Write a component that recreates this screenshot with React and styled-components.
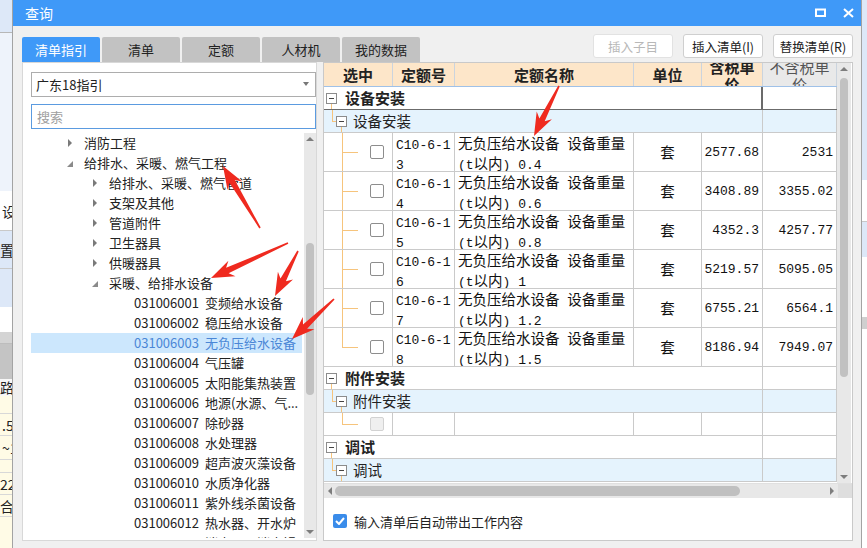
import React from "react";
import styled, { createGlobalStyle } from "styled-components";

const GlobalStyle = createGlobalStyle`
  html, body {
    margin: 0;
    padding: 0;
  }
  body {
    width: 867px;
    height: 548px;
    overflow: hidden;
    font-family: "Noto Sans CJK SC", "Noto Sans", sans-serif;
  }
  * {
    box-sizing: border-box;
  }
`;

const CJK = `"Noto Sans CJK SC", "Noto Sans", sans-serif`;
const MONO = `"Liberation Mono", "DejaVu Sans Mono", "Noto Sans CJK SC", monospace`;
const COLS = "69px 62px 179px 68px 61px 74px";
const GRID_LINE = "#cacaca";
const ORANGE = "#f6c47c";

const Page = styled.div`
  position: relative;
  display: flex;
  width: 867px;
  height: 548px;
  overflow: hidden;
  background: #fff;
`;

/* background application peeking out on both sides */
const Strip = styled.div`
  display: flex;
  flex-direction: column;
  width: ${({ w }) => w}px;
  flex-shrink: 0;
  overflow: hidden;
`;

const StripBlock = styled.div`
  height: ${({ h }) => h}px;
  flex-shrink: 0;
  background: ${({ bg }) => bg};
  border-bottom: 1px solid ${({ line }) => line || "transparent"};
  font-family: ${CJK};
  font-size: 14px;
  line-height: ${({ h }) => h}px;
  color: #222;
  white-space: nowrap;
  padding-left: ${({ shift }) => shift || 0}px;
`;

const Dialog = styled.div`
  display: flex;
  flex-direction: column;
  width: 850px;
  height: 548px;
  flex-shrink: 0;
  overflow: hidden;
  border-left: 1px solid #a3a3a3;
  border-right: 1px solid #a3a3a3;
  background: #f0f0f0;
`;

const TitleBar = styled.div`
  display: flex;
  align-items: center;
  height: 26px;
  flex-shrink: 0;
  padding: 0 7px 1px 12px;
  background: #3f99f8;
  color: #fff;
  font-family: ${CJK};
  font-size: 14px;
`;

const Title = styled.span`
  flex: 1;
`;

const TitleIcons = styled.div`
  display: flex;
  align-items: center;
  gap: 17px;
`;

const Body = styled.div`
  display: flex;
  flex-direction: column;
  flex: 1;
  min-height: 0;
  padding: 0 8px 7px 9px;
`;

const Toolbar = styled.div`
  display: flex;
  height: 36px;
  flex-shrink: 0;
`;

const Tabs = styled.div`
  display: flex;
  align-items: flex-end;
  gap: 2px;
`;

const Tab = styled.div`
  width: 78px;
  height: 25px;
  display: flex;
  align-items: center;
  justify-content: center;
  border-radius: 2px 2px 0 0;
  font-family: ${CJK};
  font-size: 13px;
  background: ${({ active }) => (active ? "#3f99f8" : "#c2c2c2")};
  color: ${({ active }) => (active ? "#fff" : "#222")};
`;

const Buttons = styled.div`
  display: flex;
  gap: 10px;
  margin-left: auto;
  padding-top: 8px;
`;

const Button = styled.div`
  width: 80px;
  height: 24px;
  display: flex;
  align-items: center;
  justify-content: center;
  background: #fff;
  border: 1px solid ${({ disabled }) => (disabled ? "#e2e2e2" : "#cfcfcf")};
  border-radius: 3px;
  font-family: ${CJK};
  font-size: 12.5px;
  color: ${({ disabled }) => (disabled ? "#b8b8b8" : "#222")};
`;

const Content = styled.div`
  display: flex;
  gap: 6px;
  flex: 1;
  min-height: 0;
`;

/* ---------- left: guide tree ---------- */

const LeftPanel = styled.div`
  width: 295px;
  display: flex;
  flex-direction: column;
  overflow: hidden;
  background: #fff;
  border: 1px solid #d8d8d8;
  padding: 9px 0 2px 8px;
`;

const Select = styled.div`
  height: 25px;
  flex-shrink: 0;
  display: flex;
  align-items: center;
  padding: 0 6px 1px 4px;
  border: 1px solid #adadad;
  font-family: ${CJK};
  font-size: 13px;
  color: #222;
`;

const SelectText = styled.span`
  flex: 1;
`;

const Caret = styled.span`
  width: 0;
  height: 0;
  border-left: 3px solid transparent;
  border-right: 3px solid transparent;
  border-top: 4px solid #777;
`;

const Search = styled.div`
  height: 25px;
  flex-shrink: 0;
  margin-top: 7px;
  display: flex;
  align-items: center;
  padding: 0 5px 1px;
  border: 1px solid #5b9be0;
  font-family: ${CJK};
  font-size: 13px;
  color: #a0a0a0;
`;

const TreeWrap = styled.div`
  flex: 1;
  display: flex;
  gap: 2px;
  margin-top: 4px;
  min-height: 0;
`;

const TreeList = styled.div`
  flex: 1;
  overflow: hidden;
`;

const TreeRow = styled.div`
  display: flex;
  align-items: center;
  height: 20px;
  padding-left: ${({ indent }) => indent}px;
  padding-bottom: 1px;
  background: ${({ selected }) => (selected ? "#cce7fd" : "transparent")};
  color: ${({ selected }) => (selected ? "#4a86d6" : "#222")};
  font-family: ${CJK};
  font-size: 13px;
  white-space: nowrap;
`;

const Toggle = styled.span`
  width: 17px;
  display: flex;
  align-items: center;
`;

const ClosedArrow = styled.span`
  width: 0;
  height: 0;
  border-top: 4px solid transparent;
  border-bottom: 4px solid transparent;
  border-left: 4px solid #7a7a7a;
  margin-left: 1px;
`;

const OpenArrow = styled.span`
  width: 0;
  height: 0;
  border-left: 6px solid transparent;
  border-bottom: 6px solid #8a8a8a;
  margin-top: 3px;
`;

const Code = styled.span`
  width: 71px;
`;

const VScroll = styled.div`
  width: ${({ w }) => w}px;
  flex-shrink: 0;
  display: flex;
  flex-direction: column;
  align-items: center;
  background: #e8e8e8;
  padding: 4px 0;
`;

const ScrollSpace = styled.div`
  height: ${({ h }) => h}px;
  flex-shrink: 0;
`;

const Thumb = styled.div`
  width: 8px;
  height: ${({ h }) => h}px;
  border-radius: 4px;
  background: #c1c1c1;
  flex-shrink: 0;
`;

const UpArrow = styled.span`
  width: 0;
  height: 0;
  border-left: 4px solid transparent;
  border-right: 4px solid transparent;
  border-bottom: 4px solid #7d7d7d;
`;

const DownArrow = styled(UpArrow)`
  border-bottom: none;
  border-top: 4px solid #7d7d7d;
  margin-top: auto;
`;

/* ---------- right: quota table ---------- */

const RightPanel = styled.div`
  flex: 1;
  display: flex;
  flex-direction: column;
  min-height: 0;
  overflow: hidden;
  background: #fff;
  border: 1px solid #c9c9c9;
`;

const GridArea = styled.div`
  display: flex;
  height: 420px;
  flex-shrink: 0;
`;

const Table = styled.div`
  width: 513px;
  overflow: hidden;
`;

const Row = styled.div`
  display: grid;
  grid-template-columns: ${COLS};
  height: ${({ h }) => h}px;
  border-bottom: 1px solid ${({ line }) => line || GRID_LINE};
  background: ${({ bg }) => bg || "#fff"};
`;

const HeadCell = styled.div`
  display: flex;
  align-items: center;
  justify-content: center;
  overflow: hidden;
  text-align: center;
  background: ${({ plain }) => (plain ? "#e9e9e9" : "#fde6c9")};
  border-right: 1px solid #cbd4de;
  font-family: ${CJK};
  font-size: 15px;
  line-height: 17px;
  font-weight: ${({ plain }) => (plain ? 400 : 700)};
  color: ${({ plain }) => (plain ? "#555" : "#222")};
`;

const Cell = styled.div`
  display: flex;
  align-items: ${({ top }) => (top ? "flex-start" : "center")};
  justify-content: ${({ align }) =>
    align === "right" ? "flex-end" : align === "center" ? "center" : "flex-start"};
  padding: ${({ top }) => (top ? "0 3px" : "0 3px")};
  border-right: 1px solid ${GRID_LINE};
  overflow: hidden;
  font-family: ${CJK};
  font-size: 14.5px;
  line-height: 20px;
  color: #111;
`;

const TreeCell = styled.div`
  display: flex;
  align-items: center;
  align-self: stretch;
  padding-left: ${({ pad }) => pad}px;
  border-right: 1px solid ${GRID_LINE};
`;

const GroupCell = styled.div`
  grid-column: span 5;
  display: flex;
  align-items: stretch;
  padding-left: ${({ pad }) => pad}px;
  border-right: ${({ focused }) => (focused ? "2px solid #6b6b6b" : `1px solid ${GRID_LINE}`)};
  border-bottom: ${({ focused }) => (focused ? "1px solid #6b6b6b" : "none")};
  margin-bottom: ${({ focused }) => (focused ? "-1px" : "0")};
`;

const GroupLabel = styled.span`
  display: flex;
  align-items: center;
  margin-left: ${({ gap }) => gap}px;
  padding-bottom: 1px;
  font-family: ${CJK};
  font-size: ${({ bold }) => (bold ? "15px" : "14.5px")};
  font-weight: ${({ bold }) => (bold ? 700 : 400)};
  color: #222;
`;

const BoxColumn = styled.div`
  display: flex;
  flex-direction: column;
  align-items: center;
  width: 11px;
`;

const Stem = styled.div`
  flex: 1;
  width: 1px;
  background: ${({ on }) => (on ? ORANGE : "transparent")};
`;

const Box = styled.div`
  width: 11px;
  height: 11px;
  flex-shrink: 0;
  display: flex;
  align-items: center;
  justify-content: center;
  border: 1px solid #8c8c8c;
  background: #fff;
`;

const Minus = styled.span`
  width: 5px;
  height: 1px;
  background: #444;
`;

const Connector = styled.div`
  display: flex;
  flex-direction: column;
  align-self: stretch;
  width: ${({ w }) => w}px;
`;

const ConnUpper = styled.div`
  flex: 1;
  border-left: 1px solid ${ORANGE};
  border-bottom: 1px solid ${ORANGE};
`;

const ConnLower = styled.div`
  flex: 1;
  border-left: 1px solid ${({ on }) => (on ? ORANGE : "transparent")};
`;

const Check = styled.div`
  width: 14px;
  height: 14px;
  margin-left: ${({ gap }) => gap}px;
  border: 1px solid ${({ disabled }) => (disabled ? "#d2d2d2" : "#8d8d8d")};
  border-radius: 2px;
  background: ${({ disabled }) => (disabled ? "#efefef" : "#fff")};
`;

const Lines = styled.div`
  display: block;
`;

const Line = styled.div`
  display: block;
  height: 20px;
  line-height: 20px;
  white-space: nowrap;
`;

const M = styled.span`
  font-family: ${MONO};
  font-size: 13px;
  line-height: 1;
`;

const HScroll = styled.div`
  display: flex;
  align-items: center;
  height: 15px;
  flex-shrink: 0;
  border-top: 1px solid #e0e0e0;
  background: #e8e8e8;
`;

const LeftTri = styled.span`
  width: 0;
  height: 0;
  margin: 0 3px 0 4px;
  border-top: 4px solid transparent;
  border-bottom: 4px solid transparent;
  border-right: 4px solid #7d7d7d;
`;

const RightTri = styled.span`
  width: 0;
  height: 0;
  margin: 0 4px 0 auto;
  border-top: 4px solid transparent;
  border-bottom: 4px solid transparent;
  border-left: 4px solid #7d7d7d;
`;

const HThumb = styled.div`
  width: 405px;
  height: 10px;
  border-radius: 5px;
  background: #c0c0c0;
`;

const Corner = styled.div`
  width: 14px;
  align-self: stretch;
  background: #dedede;
`;

const Footer = styled.div`
  flex: 1;
  display: flex;
  align-items: center;
  gap: 7px;
  padding: 4px 0 0 9px;
  font-family: ${CJK};
  font-size: 13px;
  color: #222;
`;

const BlueCheck = styled.span`
  width: 14px;
  height: 14px;
  display: flex;
  align-items: center;
  justify-content: center;
  border-radius: 2px;
  background: #3a8cea;
`;

const Overlay = styled.svg`
  position: absolute;
  left: 0;
  top: 0;
  pointer-events: none;
`;

/* ---------- data ---------- */

const treeItems = [
  { indent: 36, arrow: "closed", text: "消防工程" },
  { indent: 36, arrow: "open", text: "给排水、采暖、燃气工程" },
  { indent: 61, arrow: "closed", text: "给排水、采暖、燃气管道" },
  { indent: 61, arrow: "closed", text: "支架及其他" },
  { indent: 61, arrow: "closed", text: "管道附件" },
  { indent: 61, arrow: "closed", text: "卫生器具" },
  { indent: 61, arrow: "closed", text: "供暖器具" },
  { indent: 61, arrow: "open", text: "采暖、给排水设备" },
  { code: "031006001", text: "变频给水设备" },
  { code: "031006002", text: "稳压给水设备" },
  { code: "031006003", text: "无负压给水设备", selected: true },
  { code: "031006004", text: "气压罐" },
  { code: "031006005", text: "太阳能集热装置" },
  { code: "031006006", text: "地源(水源、气..." },
  { code: "031006007", text: "除砂器" },
  { code: "031006008", text: "水处理器" },
  { code: "031006009", text: "超声波灭藻设备" },
  { code: "031006010", text: "水质净化器" },
  { code: "031006011", text: "紫外线杀菌设备" },
  { code: "031006012", text: "热水器、开水炉" },
  { code: "031006013", text: "消毒器、消毒锅" },
];

const quotas = [
  { code: "C10-6-13", w: "0.4", p1: "2577.68", p2: "2531" },
  { code: "C10-6-14", w: "0.6", p1: "3408.89", p2: "3355.02" },
  { code: "C10-6-15", w: "0.8", p1: "4352.3", p2: "4257.77" },
  { code: "C10-6-16", w: "1", p1: "5219.57", p2: "5095.05" },
  { code: "C10-6-17", w: "1.2", p1: "6755.21", p2: "6564.1" },
  { code: "C10-6-18", w: "1.5", p1: "8186.94", p2: "7949.07" },
];

const arrows = [
  [260, 228, 223, 166],
  [288, 243, 211, 278],
  [298, 251, 275, 296],
  [334, 299, 292, 339],
  [559, 86, 534, 136],
];

const leftBlocks = [
  { h: 33, bg: "#dde8f8", line: "#b7b7b7" },
  { h: 158, bg: "#eef3fb" },
  { h: 40, bg: "#fff", line: "#c9c9c9", text: "设", shift: 2 },
  { h: 38, bg: "#dde8f8", line: "#c9c9c9", text: "置", shift: -2 },
  { h: 38, bg: "#dde8f8" },
  { h: 25, bg: "#fff" },
  { h: 12, bg: "#d4d4d4", line: "#bdbdbd" },
  { h: 35, bg: "#c4c4c4" },
  { h: 17, bg: "#f7f7f7", text: "路", shift: -3 },
  { h: 18, bg: "#fffbe6", line: "#d8d8d8" },
  { h: 22, bg: "#fffbe6", line: "#d8d8d8", text: ".5", shift: 2 },
  { h: 24, bg: "#fffbe6", line: "#d8d8d8", text: "~1", shift: 2 },
  { h: 13, bg: "#fffbe6", line: "#d8d8d8" },
  { h: 22, bg: "#fffbe6", line: "#d8d8d8", text: "22", shift: -1 },
  { h: 22, bg: "#fffbe6", line: "#d8d8d8", text: "合", shift: -2 },
  { h: 40, bg: "#fffbe6" },
];

const rightBlocks = [
  { h: 180, bg: "#dde8f8" },
  { h: 42, bg: "#fff", line: "#c8c8c8" },
  { h: 35, bg: "#dde8f8" },
  { h: 60, bg: "#fff" },
  { h: 12, bg: "#cfcfcf" },
  { h: 219, bg: "#fff" },
];

function arrowPoints([x1, y1, x2, y2]) {
  const dx = x2 - x1;
  const dy = y2 - y1;
  const len = Math.hypot(dx, dy);
  const ux = dx / len;
  const uy = dy / len;
  const nx = -uy;
  const ny = ux;
  const neckX = x2 - ux * 18;
  const neckY = y2 - uy * 18;
  const wingX = x2 - ux * 23;
  const wingY = y2 - uy * 23;
  const p = (x, y) => `${x.toFixed(1)},${y.toFixed(1)}`;
  return [
    p(x1 + nx * 0.8, y1 + ny * 0.8),
    p(neckX + nx * 3, neckY + ny * 3),
    p(wingX + nx * 8.5, wingY + ny * 8.5),
    p(x2, y2),
    p(wingX - nx * 8.5, wingY - ny * 8.5),
    p(neckX - nx * 3, neckY - ny * 3),
    p(x1 - nx * 0.8, y1 - ny * 0.8),
  ].join(" ");
}

const BackStrip = ({ w, blocks }) => (
  <Strip w={w}>
    {blocks.map((b, i) => (
      <StripBlock key={i} {...b}>
        {b.text}
      </StripBlock>
    ))}
  </Strip>
);

const GroupRow = ({ label, focused, stem = true }) => (
  <Row h={23} line={focused ? "#6b6b6b" : GRID_LINE}>
    <GroupCell pad={2} focused={focused}>
      <BoxColumn>
        <Stem />
        <Box>
          <Minus />
        </Box>
        <Stem on={stem} />
      </BoxColumn>
      <GroupLabel bold gap={8}>
        {label}
      </GroupLabel>
    </GroupCell>
    <Cell />
  </Row>
);

const SubGroupRow = ({ label }) => (
  <Row h={23} bg="#e5f3fd">
    <GroupCell pad={8}>
      <Connector w={4}>
        <ConnUpper />
        <ConnLower />
      </Connector>
      <BoxColumn>
        <Stem />
        <Box>
          <Minus />
        </Box>
        <Stem on />
      </BoxColumn>
      <GroupLabel gap={6}>{label}</GroupLabel>
    </GroupCell>
    <Cell />
  </Row>
);

const QuotaRow = ({ q, last }) => (
  <Row h={39}>
    <TreeCell pad={18}>
      <Connector w={16}>
        <ConnUpper />
        <ConnLower on={!last} />
      </Connector>
      <Check gap={12} />
    </TreeCell>
    <Cell top>
      <Lines>
        <Line>
          <M>{q.code.slice(0, 7)}</M>
        </Line>
        <Line>
          <M>{q.code.slice(7)}</M>
        </Line>
      </Lines>
    </Cell>
    <Cell top>
      <Lines>
        <Line>
          无负压给水设备<M>&nbsp;</M>设备重量
        </Line>
        <Line>
          <M>(t</M>以内<M>)&nbsp;{q.w}</M>
        </Line>
      </Lines>
    </Cell>
    <Cell align="center">套</Cell>
    <Cell align="right">
      <M>{q.p1}</M>
    </Cell>
    <Cell align="right">
      <M>{q.p2}</M>
    </Cell>
  </Row>
);

const EmptyRow = () => (
  <Row h={23}>
    <TreeCell pad={18}>
      <Connector w={16}>
        <ConnUpper />
        <ConnLower />
      </Connector>
      <Check gap={12} disabled />
    </TreeCell>
    <Cell />
    <Cell />
    <Cell />
    <Cell />
    <Cell />
  </Row>
);

export default function App() {
  return (
    <Page>
      <GlobalStyle />
      <BackStrip w={12} blocks={leftBlocks} />
      <Dialog>
        <TitleBar>
          <Title>查询</Title>
          <TitleIcons>
            <svg width="11" height="9" viewBox="0 0 11 9">
              <rect x="1" y="1.5" width="9" height="6.5" fill="none" stroke="#fff" strokeWidth="2" />
            </svg>
            <svg width="11" height="10" viewBox="0 0 11 10">
              <path d="M1 1 L10 9 M10 1 L1 9" stroke="#fff" strokeWidth="2" />
            </svg>
          </TitleIcons>
        </TitleBar>
        <Body>
          <Toolbar>
            <Tabs>
              <Tab active>清单指引</Tab>
              <Tab>清单</Tab>
              <Tab>定额</Tab>
              <Tab>人材机</Tab>
              <Tab>我的数据</Tab>
            </Tabs>
            <Buttons>
              <Button disabled>插入子目</Button>
              <Button>插入清单(I)</Button>
              <Button>替换清单(R)</Button>
            </Buttons>
          </Toolbar>
          <Content>
            <LeftPanel>
              <Select>
                <SelectText>广东18指引</SelectText>
                <Caret />
              </Select>
              <Search>搜索</Search>
              <TreeWrap>
                <TreeList>
                  {treeItems.map((t, i) =>
                    t.code ? (
                      <TreeRow key={i} indent={103} selected={t.selected}>
                        <Code>{t.code}</Code>
                        {t.text}
                      </TreeRow>
                    ) : (
                      <TreeRow key={i} indent={t.indent}>
                        <Toggle>{t.arrow === "open" ? <OpenArrow /> : <ClosedArrow />}</Toggle>
                        {t.text}
                      </TreeRow>
                    )
                  )}
                </TreeList>
                <VScroll w={12}>
                  <UpArrow />
                  <ScrollSpace h={102} />
                  <Thumb h={152} />
                  <DownArrow />
                </VScroll>
              </TreeWrap>
            </LeftPanel>
            <RightPanel>
              <GridArea>
                <Table>
                  <Row h={24} line="#9fc1e8">
                    <HeadCell>选中</HeadCell>
                    <HeadCell>定额号</HeadCell>
                    <HeadCell>定额名称</HeadCell>
                    <HeadCell>单位</HeadCell>
                    <HeadCell>
                      含税单
                      <br />
                      价
                    </HeadCell>
                    <HeadCell plain>
                      不含税单
                      <br />
                      价
                    </HeadCell>
                  </Row>
                  <GroupRow label="设备安装" focused />
                  <SubGroupRow label="设备安装" />
                  {quotas.map((q, i) => (
                    <QuotaRow key={q.code} q={q} last={i === quotas.length - 1} />
                  ))}
                  <GroupRow label="附件安装" />
                  <SubGroupRow label="附件安装" />
                  <EmptyRow />
                  <GroupRow label="调试" />
                  <SubGroupRow label="调试" />
                </Table>
                <VScroll w={14}>
                  <UpArrow />
                  <ScrollSpace h={7} />
                  <Thumb h={299} />
                  <DownArrow />
                </VScroll>
              </GridArea>
              <HScroll>
                <LeftTri />
                <HThumb />
                <RightTri />
                <Corner />
              </HScroll>
              <Footer>
                <BlueCheck>
                  <svg width="10" height="8" viewBox="0 0 10 8">
                    <path d="M1 4 L4 7 L9 1" fill="none" stroke="#fff" strokeWidth="2" />
                  </svg>
                </BlueCheck>
                输入清单后自动带出工作内容
              </Footer>
            </RightPanel>
          </Content>
        </Body>
      </Dialog>
      <BackStrip w={5} blocks={rightBlocks} />
      <Overlay width="867" height="548" viewBox="0 0 867 548">
        {arrows.map((a, i) => (
          <polygon key={i} points={arrowPoints(a)} fill="#ef2a1f" />
        ))}
      </Overlay>
    </Page>
  );
}
